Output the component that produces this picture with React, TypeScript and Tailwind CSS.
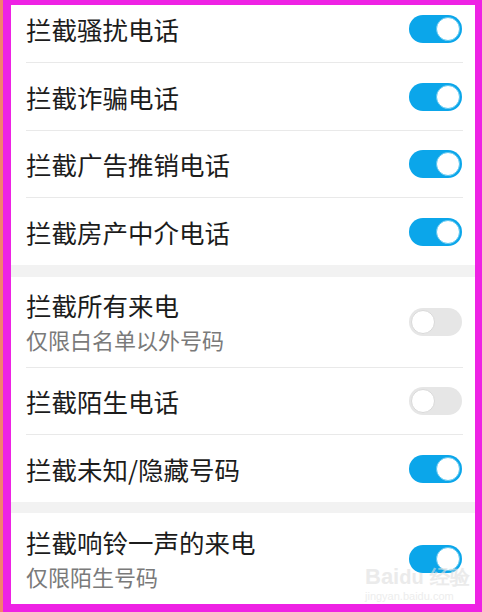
type Item = { title: string; sub?: string; on: boolean; h: string; divider: boolean; first?: boolean }

const items: (Item | 'band12' | 'band11')[] = [
  { title: '拦截骚扰电话', on: true, h: 'h-[58px]', divider: true, first: true },
  { title: '拦截诈骗电话', on: true, h: 'h-[68px]', divider: true },
  { title: '拦截广告推销电话', on: true, h: 'h-[67px]', divider: true },
  { title: '拦截房产中介电话', on: true, h: 'h-[67px]', divider: false },
  'band12',
  { title: '拦截所有来电', sub: '仅限白名单以外号码', on: false, h: 'h-[91px]', divider: true },
  { title: '拦截陌生电话', on: false, h: 'h-[67px]', divider: true },
  { title: '拦截未知/隐藏号码', on: true, h: 'h-[67px]', divider: false },
  'band11',
  { title: '拦截响铃一声的来电', sub: '仅限陌生号码', on: true, h: 'h-[91px]', divider: false },
]

const Toggle = ({ on }: { on: boolean }) => (
  <div
    className={`w-[53px] h-[28px] rounded-full flex items-center px-[2px] ${
      on ? 'bg-[#0ba6ea] justify-end' : 'bg-[#e6e6e6] justify-start'
    }`}
  >
    <div
      className={`w-[24px] h-[24px] rounded-full bg-white border ${
        on ? 'border-[#5cc6f0]' : 'border-[#d9d9d9]'
      }`}
    />
  </div>
)

const Row = ({ item }: { item: Item }) => (
  <div className={`${item.h} ml-[15px] mr-[12px] flex items-center justify-between ${item.divider ? 'border-b border-[#e9e9e9]' : ''} ${item.first ? 'pb-[9px]' : ''}`}>
    <div className="flex flex-col">
      <span className="text-[25.5px] leading-[34px] text-[#1c1c1c]">{item.title}</span>
      {item.sub && <span className="text-[22px] leading-[34px] text-[#7a7a7a]">{item.sub}</span>}
    </div>
    <div className="mr-[1px]">
      <Toggle on={item.on} />
    </div>
  </div>
)

export default function App() {
  return (
    <div
      className="w-[482px] h-[612px] flex bg-[#ee22e4] overflow-hidden"
      style={{ fontFamily: '"Noto Sans CJK SC", "Noto Sans", sans-serif' }}
    >
      <div className="w-[3px] h-full bg-[#f4806c]" />
      <div className="flex-1 pl-[8px] pr-[7px] pt-[5px] pb-[8px]">
        <div className="relative w-full h-full bg-white overflow-hidden">
          {items.map((it, i) =>
            it === 'band12' ? (
              <div key={i} className="h-[12px] bg-[#f2f2f2]" />
            ) : it === 'band11' ? (
              <div key={i} className="h-[11px] bg-[#f2f2f2]" />
            ) : (
              <Row key={i} item={it} />
            )
          )}
          {/* watermark */}
          <div className="absolute left-[354px] top-[560px] flex flex-col items-start opacity-60">
            <span className="text-[22px] leading-[24px] font-bold text-[#dedede]" style={{ fontFamily: '"Liberation Sans", sans-serif' }}>
              Bai<span className="text-[20px]">du</span> <span className="text-[20px]">经验</span>
            </span>
            <span className="text-[11px] leading-[14px] text-[#e2e2e2]" style={{ fontFamily: '"Liberation Sans", sans-serif' }}>
              jingyan.baidu.com
            </span>
          </div>
        </div>
      </div>
    </div>
  )
}
